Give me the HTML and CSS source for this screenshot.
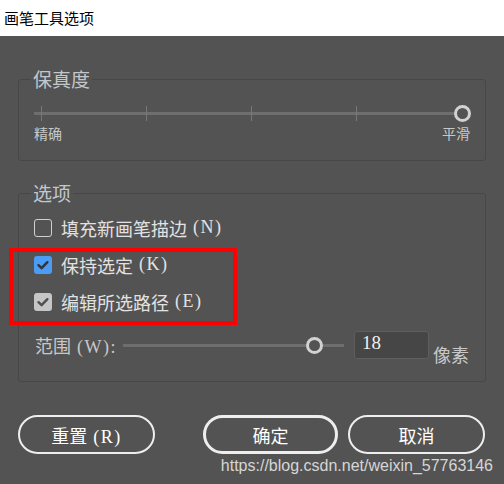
FILE: index.html
```html
<!DOCTYPE html>
<html lang="zh-CN">
<head>
  <meta charset="UTF-8" />
  <title>画笔工具选项</title>
  <link rel="stylesheet" href="styles.css">
</head>
<body>
  <div class="titlebar">画笔工具选项</div>

  <div class="dialog">
    <fieldset class="group group-fidelity">
      <legend>保真度</legend>
      <div class="slider">
        <div class="track ticks">
          <span class="tick"></span>
          <span class="tick"></span>
          <span class="tick"></span>
          <span class="tick"></span>
        </div>
        <span class="knob"></span>
      </div>
      <div class="slider-labels"><span>精确</span><span>平滑</span></div>
    </fieldset>

    <fieldset class="group group-options">
      <legend>选项</legend>
      <label class="check-row">
        <span class="box"></span>填充新画笔描边<span class="key"> (N)</span>
      </label>
      <label class="check-row">
        <span class="box box-blue"><svg viewBox="0 0 18 18"><path d="M4.5 9.2 L7.6 12.2 L13.4 6.2" /></svg></span>保持选定<span class="key"> (K)</span>
      </label>
      <label class="check-row">
        <span class="box box-gray"><svg viewBox="0 0 18 18"><path d="M4.5 9.2 L7.6 12.2 L13.4 6.2" /></svg></span>编辑所选路径<span class="key"> (E)</span>
      </label>
      <div class="range-row">
        <span class="range-label">范围<span class="key"> (W):</span></span>
        <div class="range-slider">
          <div class="track"></div>
          <span class="knob"></span>
          <div class="track track-end"></div>
        </div>
        <div class="num-input">18</div>
        <span class="unit">像素</span>
      </div>
    </fieldset>

    <div class="buttons">
      <button class="btn">重置<span class="key"> (R)</span></button>
      <button class="btn btn-primary">确定</button>
      <button class="btn">取消</button>
    </div>

    <!-- annotation + watermark from the screenshot -->
    <div class="highlight"></div>
    <div class="watermark">https://blog.csdn.net/weixin_57763146</div>
  </div>
</body>
</html>
```

FILE: styles.css
```css
body {
  margin: 0;
  width: 504px;
  height: 484px;
  overflow: hidden;
  background-color: #535353;
  font-family: "Noto Sans CJK SC", sans-serif;
}

.titlebar {
  height: 36px;
  line-height: 35px;
  padding-left: 4px;
  background-color: #fff;
  color: #000;
  font-size: 15px;
}

.dialog {
  position: relative;
  height: 448px;
  padding-top: 33px;
  box-sizing: border-box;
  color: #dedede;
}

.key {
  font-family: "Liberation Serif", serif;
  letter-spacing: 1.5px;
}

.group {
  margin: 0 18px;
  min-width: 0;
  border: 1px solid #474747;
  border-radius: 3px;
  padding: 0 14px 0 15px;
}

.group legend {
  font-size: 19px;
  line-height: 20px;
  color: #c3c7cc;
  padding: 0 2px;
  margin-left: -3px;
}

.group-fidelity {
  padding-bottom: 19px;
}

.group-options {
  margin-top: 22px;
  padding-top: 6px;
  padding-bottom: 21px;
}

/* sliders */
.slider {
  display: flex;
  align-items: center;
  height: 17px;
  margin-top: 16px;
}

.track {
  flex: 1;
  height: 3px;
  background-color: #6e6e6e;
}

.ticks {
  display: flex;
  align-items: center;
  gap: 104px;
  height: 15px;
  padding-left: 7px;
  background: linear-gradient(#6e6e6e, #6e6e6e) center / 100% 3px no-repeat;
}

.tick {
  width: 1px;
  height: 15px;
  background-color: #787878;
}

.knob {
  width: 17px;
  height: 17px;
  box-sizing: border-box;
  border: 3px solid #d2d2d2;
  border-radius: 50%;
  background-color: #535353;
}

.slider-labels {
  display: flex;
  justify-content: space-between;
  margin-top: 3px;
  padding-right: 1px;
  font-size: 14px;
  line-height: 16px;
  color: #c8c8c8;
}

/* checkboxes */
.check-row {
  display: flex;
  align-items: center;
  height: 37px;
  font-size: 18px;
  color: #e2e2e2;
  white-space: pre;
}

.box {
  width: 18px;
  height: 18px;
  margin-right: 9px;
  box-sizing: border-box;
  border: 1.5px solid #d0d0d0;
  border-radius: 3px;
}

.box svg {
  display: block;
  width: 18px;
  height: 18px;
  fill: none;
  stroke: #333;
  stroke-width: 2.4;
  stroke-linecap: round;
  stroke-linejoin: round;
}

.box-blue,
.box-gray {
  border: none;
}

.box-blue {
  background-color: #4b9cf4;
}

.box-gray {
  background-color: #c6c6c6;
}

.box-gray svg {
  stroke: #505050;
}

/* range row */
.range-row {
  display: flex;
  align-items: center;
  height: 30px;
  margin-top: 10px;
}

.range-label {
  width: 88px;
  padding-left: 1px;
  font-size: 18px;
  color: #c8c8c8;
  white-space: pre;
}

.range-slider {
  display: flex;
  align-items: center;
  width: 221px;
}

.track-end {
  flex: none;
  width: 21px;
}

.num-input {
  width: 75px;
  height: 28px;
  box-sizing: border-box;
  margin-left: 10px;
  padding: 0 7px;
  border: 1px solid #5e5e5e;
  border-radius: 3px;
  background-color: #464646;
  font-family: "Liberation Serif", serif;
  font-size: 19px;
  line-height: 22px;
  color: #f0f0f0;
}

.unit {
  align-self: flex-end;
  margin-left: 4px;
  margin-bottom: -4px;
  font-size: 18px;
  line-height: 20px;
  color: #c8c8c8;
}

/* buttons */
.buttons {
  display: flex;
  gap: 10px;
  margin-top: 33px;
  padding-left: 18px;
}

.btn {
  width: 137px;
  height: 39px;
  border: 2px solid #eeeeee;
  border-radius: 20px;
  background: transparent;
  color: #fff;
  font-family: inherit;
  font-size: 18px;
  padding: 0;
  white-space: pre;
}

.btn-primary {
  width: 135px;
  margin-left: 38px;
  border-width: 3px;
}

.highlight {
  position: absolute;
  left: 9px;
  top: 212px;
  width: 228px;
  height: 77px;
  box-sizing: border-box;
  border: 4px solid #ff0000;
}

.watermark {
  position: absolute;
  right: 11px;
  bottom: 9px;
  font-family: "Liberation Sans", Arial, sans-serif;
  font-size: 16px;
  color: #d6d6d6;
}
```
